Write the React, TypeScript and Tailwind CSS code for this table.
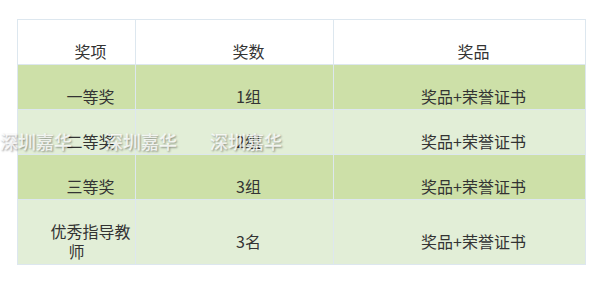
const rows = [
  { name: '一等奖', count: '1组', prize: '奖品+荣誉证书', bg: 'bg-[#cde0a8]' },
  { name: '二等奖', count: '2组', prize: '奖品+荣誉证书', bg: 'bg-[#e2eed7]' },
  { name: '三等奖', count: '3组', prize: '奖品+荣誉证书', bg: 'bg-[#cde0a8]' },
  { name: '优秀指导教师', count: '3名', prize: '奖品+荣誉证书', bg: 'bg-[#e2eed7]' },
];

const cell = 'border border-[#dde7ef] px-[3px] pt-[21px] pb-[3px] text-center indent-[28px] align-middle';

export default function App() {
  return (
    <div
      className="relative w-[609px] h-[283px] bg-white text-[16px] leading-[20px] text-[#333] overflow-hidden"
      style={{ fontFamily: '"Noto Sans CJK SC", "Noto Sans", sans-serif' }}
    >
      <div className="pt-[19px] pl-[17px]">
        <table className="border-collapse table-fixed w-[568px]">
          <colgroup>
            <col className="w-[118px]" />
            <col className="w-[198px]" />
            <col className="w-[252px]" />
          </colgroup>
          <thead>
            <tr className="bg-white">
              <td className={cell}>奖项</td>
              <td className={cell}>奖数</td>
              <td className={cell}>奖品</td>
            </tr>
          </thead>
          <tbody>
            {rows.map((r, i) => (
              <tr key={i} className={r.bg}>
                <td className={cell}>{r.name}</td>
                <td className={cell}>{r.count}</td>
                <td className={cell}>{r.prize}</td>
              </tr>
            ))}
          </tbody>
        </table>
      </div>

      {/* watermark */}
      <div className="absolute left-0 top-[129px] flex pointer-events-none select-none">
        {[0, 1, 2].map((i) => (
          <span
            key={i}
            className="w-[105px] shrink-0 text-[18px] leading-[24px] font-medium text-white/80 [text-shadow:1px_1px_2px_rgba(0,0,0,0.4)]"
          >
            深圳嘉华
          </span>
        ))}
      </div>
    </div>
  );
}
